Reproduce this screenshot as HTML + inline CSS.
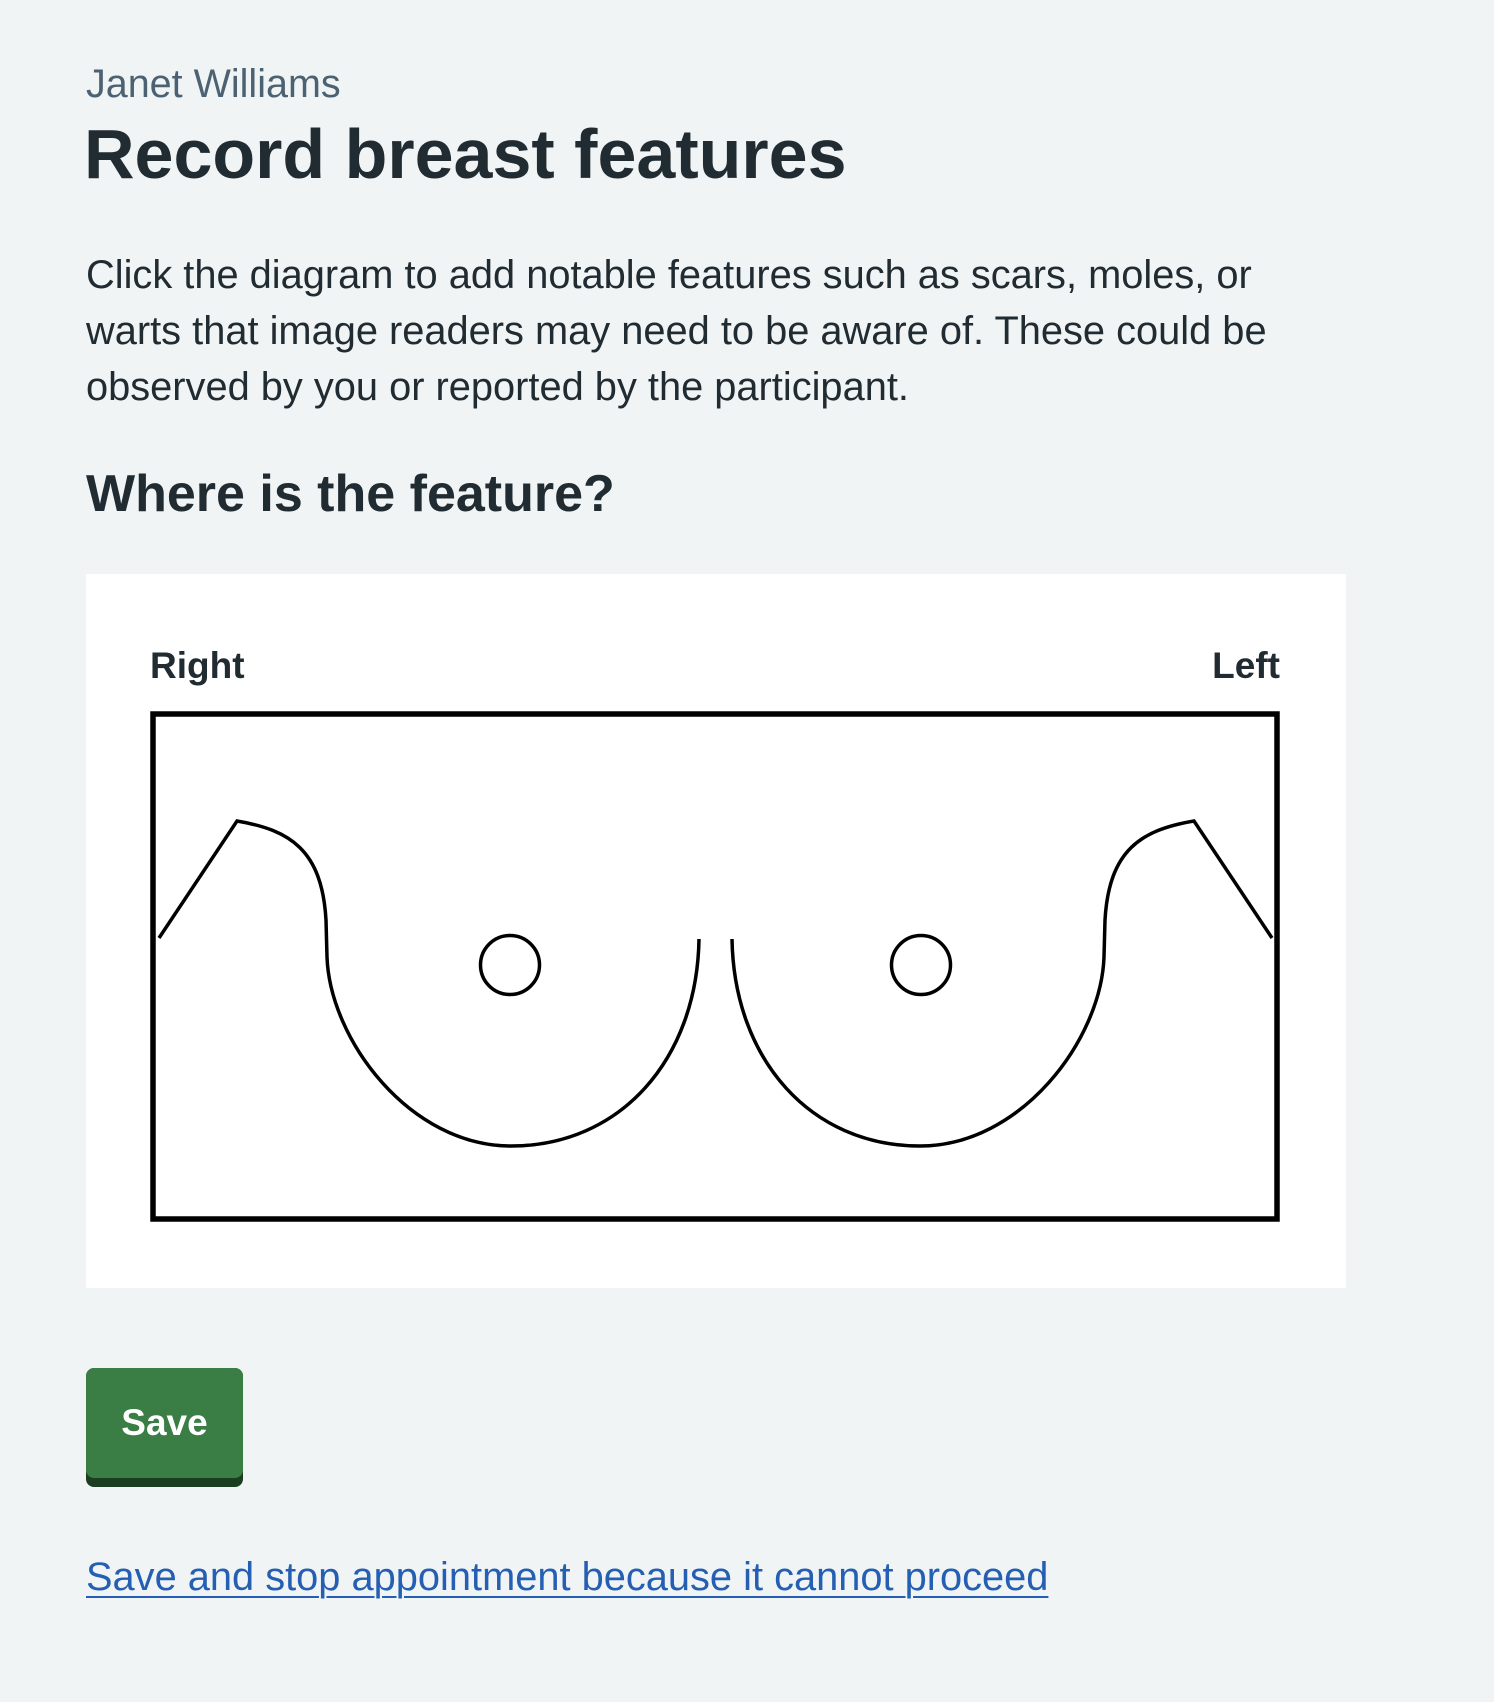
<!DOCTYPE html>
<html><head><meta charset="utf-8"><style>
html,body{margin:0;padding:0;background:#f0f4f5;}
body{width:1494px;height:1702px;position:relative;overflow:hidden;font-family:"Liberation Sans",Arial,sans-serif;color:#212b32;}
.a{position:absolute;white-space:nowrap;margin:0;}
</style></head><body>
<div class="a" style="left:86px;top:62px;font-size:39.5px;line-height:44px;color:#4c6272;">Janet Williams</div>
<h1 class="a" style="left:84px;top:112px;font-size:70px;line-height:84px;font-weight:bold;">Record breast features</h1>
<p class="a" style="left:86px;top:247px;font-size:39.8px;line-height:56px;">Click the diagram to add notable features such as scars, moles, or<br>warts that image readers may need to be aware of. These could be<br>observed by you or reported by the participant.</p>
<h2 class="a" style="left:86px;top:462px;font-size:52px;line-height:64px;font-weight:bold;">Where is the feature?</h2>
<div class="a" style="left:86px;top:574px;width:1260px;height:714px;background:#fff;"></div>
<div class="a" style="left:150px;top:644px;font-size:37px;line-height:44px;font-weight:bold;">Right</div>
<div class="a" style="left:1180px;width:100px;text-align:right;top:644px;font-size:37px;line-height:44px;font-weight:bold;">Left</div>
<svg class="a" style="left:0;top:0" width="1494" height="1702" viewBox="0 0 1494 1702">
<rect x="153" y="714" width="1124" height="505" fill="none" stroke="#000" stroke-width="5.5"/>
<g fill="none" stroke="#000" stroke-width="3.5">
<path d="M159 938 L237 821 C290 830 322 850 326 920 L327 957 C330 1040 410 1146 511 1146 C620 1146 697 1060 699 939"/>
<circle cx="510" cy="965" r="29.5"/>
<g transform="translate(1431,0) scale(-1,1)">
<path d="M159 938 L237 821 C290 830 322 850 326 920 L327 957 C330 1040 410 1146 511 1146 C620 1146 697 1060 699 939"/>
<circle cx="510" cy="965" r="29.5"/>
</g></g>
</svg>
<div class="a" style="left:86px;top:1368px;width:157px;height:119px;background:#1b3d20;border-radius:8px;"></div>
<div class="a" style="left:86px;top:1368px;width:157px;height:110px;background:#3a7d45;border-radius:8px;color:#fff;font-weight:bold;font-size:37px;line-height:110px;text-align:center;">Save</div>
<a class="a" style="left:86px;top:1553px;font-size:39.8px;line-height:48px;color:#255fb3;text-decoration:underline;text-underline-offset:6px;text-decoration-thickness:2px;">Save and stop appointment because it cannot proceed</a>
</body></html>
